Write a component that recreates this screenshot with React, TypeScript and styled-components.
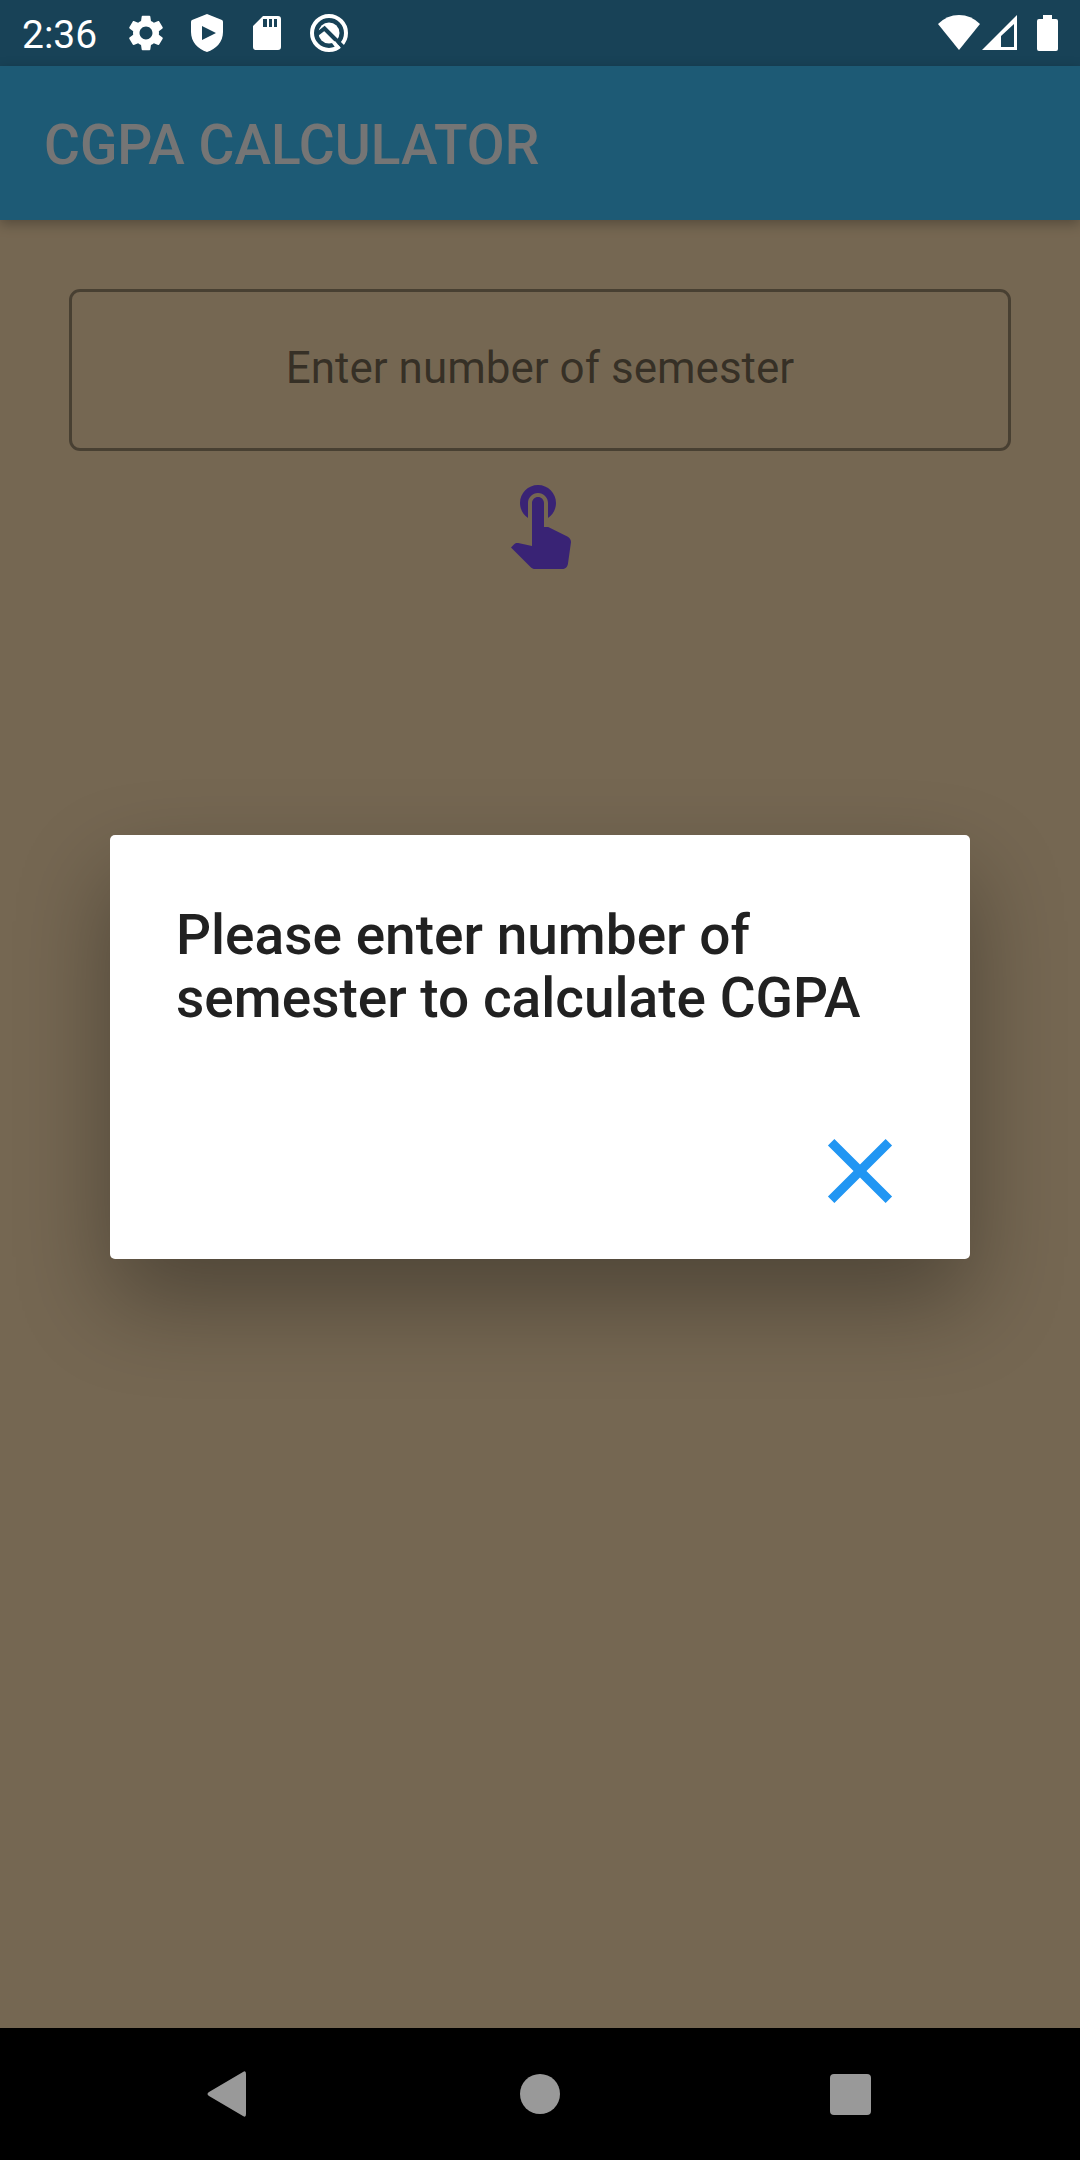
import React, { useState } from "react";
import styled, { createGlobalStyle } from "styled-components";

const GlobalStyle = createGlobalStyle`
  *, *::before, *::after { box-sizing: border-box; }
  body {
    margin: 0;
    font-family: Roboto, "Liberation Sans", sans-serif;
    background: #000;
  }
  button { border: 0; padding: 0; background: none; cursor: pointer; }
`;

const Screen = styled.div`
  display: flex;
  flex-direction: column;
  min-height: 100vh;
`;

const StatusBar = styled.div`
  display: flex;
  align-items: center;
  justify-content: space-between;
  height: 66px;
  padding: 0 20px 0 22px;
  background: #184257;
  color: #fff;
`;

const StatusGroup = styled.div<{ $gap: number }>`
  display: flex;
  align-items: center;
  gap: ${(p) => p.$gap}px;
`;

const Clock = styled.time`
  margin-right: 5px;
  padding-top: 3px;
  font-size: 39px;
  line-height: 46px;
`;

const Glyph = styled.svg`
  display: block;
  fill: currentColor;
`;

const AppArea = styled.div`
  position: relative;
  display: flex;
  flex: 1;
  flex-direction: column;
  background: #ffe0b2;
`;

const AppBar = styled.header`
  display: flex;
  align-items: center;
  height: 154px;
  padding: 4px 44px 0;
  background: #40c4ff;
  box-shadow: 0 4px 12px rgba(0, 0, 0, 0.28);
`;

const AppTitle = styled.h1`
  margin: 0;
  color: #fff;
  font-size: 55px;
  font-weight: 500;
  line-height: 64px;
`;

const Form = styled.form`
  display: flex;
  flex-direction: column;
  align-items: center;
  gap: 22px;
  padding: 69px;
`;

const SemesterInput = styled.input`
  width: 100%;
  height: 162px;
  padding: 0 33px 4px;
  border: 3px solid rgba(0, 0, 0, 0.38);
  border-radius: 11px;
  outline: none;
  background: transparent;
  color: rgba(0, 0, 0, 0.87);
  font-family: inherit;
  font-size: 44px;
  text-align: center;
  &::placeholder { color: rgba(0, 0, 0, 0.54); opacity: 1; }
`;

const TapButton = styled.button`
  color: #7c4dff;
`;

const Scrim = styled.div`
  position: absolute;
  inset: 0;
  display: flex;
  align-items: center;
  padding: 0 110px;
  background: rgba(0, 0, 0, 0.54);
`;

const Dialog = styled.section`
  display: flex;
  flex: 1;
  flex-direction: column;
  gap: 86px;
  padding: 69px 55px 33px 66px;
  border-radius: 5px;
  background: #fff;
  box-shadow: 0 42px 94px rgba(0, 0, 0, 0.33);
`;

const DialogTitle = styled.h2`
  margin: 0;
  color: #212121;
  font-size: 55px;
  font-weight: 500;
  line-height: 63px;
`;

const CloseButton = styled.button`
  align-self: flex-end;
  color: #2196f3;
`;

const NavBar = styled.nav`
  display: grid;
  grid-template-columns: repeat(3, 311px);
  justify-content: center;
  height: 132px;
  background: #000;
`;

const NavButton = styled.button`
  display: grid;
  place-items: center;
  color: #999;
`;

export default function App() {
  const [open, setOpen] = useState(true);
  return (
    <Screen>
      <GlobalStyle />
      <StatusBar>
        <StatusGroup $gap={26}>
          <Clock>2:36</Clock>
          <Glyph width="36" height="36" viewBox="2 2 20 20" aria-label="Settings">
            <path d="M19.14 12.94c.04-.3.06-.61.06-.94 0-.32-.02-.64-.07-.94l2.03-1.58c.18-.14.23-.41.12-.61l-1.92-3.32c-.12-.22-.37-.29-.59-.22l-2.39.96c-.5-.38-1.03-.7-1.62-.94l-.36-2.54c-.04-.24-.24-.41-.48-.41h-3.84c-.24 0-.43.17-.47.41l-.36 2.54c-.59.24-1.13.57-1.62.94l-2.39-.96c-.22-.08-.47 0-.59.22L2.74 8.87c-.12.21-.08.47.12.61l2.03 1.58c-.05.3-.09.63-.09.94s.02.64.07.94l-2.03 1.58c-.18.14-.23.41-.12.61l1.92 3.32c.12.22.37.29.59.22l2.39-.96c.5.38 1.03.7 1.62.94l.36 2.54c.05.24.24.41.48.41h3.84c.24 0 .44-.17.47-.41l.36-2.54c.59-.24 1.13-.56 1.62-.94l2.39.96c.22.08.47 0 .59-.22l1.92-3.32c.12-.22.07-.47-.12-.61l-2.01-1.58zM12 15.6c-1.98 0-3.6-1.62-3.6-3.6s1.62-3.6 3.6-3.6 3.6 1.62 3.6 3.6-1.62 3.6-3.6 3.6z" />
          </Glyph>
          <Glyph width="34" height="38" viewBox="0 0 34 38" aria-label="Play Protect">
            <path fillRule="evenodd" d="M17 0L32 6Q33 6.500 33 8V18C33 28 26 35 17 38C8 35 1 28 1 18V8Q1 6.500 2 6ZM12 12V26L26 19Z" />
          </Glyph>
          <Glyph width="34" height="36" viewBox="1 0 34 36" aria-label="SD card">
            <path fillRule="evenodd" d="M14 1H29Q32 1 32 4V32Q32 35 29 35H7Q4 35 4 32V11ZM14 4V12H18V4ZM20 4V12H23V4ZM25 4V12H28V4Z" />
          </Glyph>
          <Glyph width="38" height="38" viewBox="0 0 38 38" aria-label="Debugging">
            <circle cx="19" cy="19" r="17" fill="none" stroke="currentColor" strokeWidth="4" />
            <circle cx="19" cy="19" r="10.500" />
            <path fill="none" stroke="#184257" strokeWidth="4" d="M6 21L14.500 14.500L34 34" />
            <path d="M22 29L25 27L30 33L27 36Z" />
          </Glyph>
        </StatusGroup>
        <StatusGroup $gap={2}>
          <Glyph width="42" height="36" viewBox="0 0 42 36" aria-label="Wi-Fi">
            <path d="M0 9Q9 0 21 0T42 9L21 35Z" />
          </Glyph>
          <Glyph width="52" height="36" viewBox="0 0 52 36" aria-label="Mobile signal">
            <path fillRule="evenodd" d="M35 0V35H0ZM32 9L19 21V32H32Z" />
          </Glyph>
          <Glyph width="24" height="36" viewBox="0 0 24 36" aria-label="Battery">
            <path d="M7 0H16V4H20Q22 4 22 6V34Q22 36 20 36H3Q1 36 1 34V6Q1 4 3 4H7Z" />
          </Glyph>
        </StatusGroup>
      </StatusBar>
      <AppArea>
        <AppBar>
          <AppTitle>CGPA CALCULATOR</AppTitle>
        </AppBar>
        <Form
          onSubmit={(e) => {
            e.preventDefault();
            setOpen(true);
          }}
        >
          <SemesterInput
            aria-label="Enter number of semester"
            placeholder="Enter number of semester"
            inputMode="numeric"
          />
          <TapButton type="submit" aria-label="Calculate">
            <Glyph width="96" height="96" viewBox="0 0 24 24">
              <path d="M9 11.24V7.5C9 6.12 10.12 5 11.5 5S14 6.12 14 7.5v3.74c1.21-.81 2-2.18 2-3.74C16 5.01 13.99 3 11.5 3S7 5.01 7 7.5c0 1.56.79 2.93 2 3.74zm9.84 4.63l-4.54-2.26c-.17-.07-.35-.11-.54-.11H13v-6c0-.83-.67-1.5-1.5-1.5S10 6.67 10 7.5v10.74l-3.43-.72c-.08-.01-.15-.03-.24-.03-.31 0-.59.13-.79.33l-.79.8 4.94 4.94c.27.27.65.44 1.06.44h6.79c.75 0 1.33-.55 1.44-1.28l.75-5.27c.01-.07.02-.14.02-.2 0-.62-.38-1.16-.91-1.38z" />
            </Glyph>
          </TapButton>
        </Form>
        {open && (
          <Scrim>
            <Dialog role="alertdialog" aria-modal="true" aria-labelledby="dialog-title">
              <DialogTitle id="dialog-title">
                Please enter number of semester to calculate CGPA
              </DialogTitle>
              <CloseButton type="button" aria-label="Close" onClick={() => setOpen(false)}>
                <Glyph width="110" height="110" viewBox="0 0 24 24">
                  <path d="M19 6.41L17.59 5 12 10.59 6.41 5 5 6.41 10.59 12 5 17.59 6.41 19 12 13.41 17.59 19 19 17.59 13.41 12z" />
                </Glyph>
              </CloseButton>
            </Dialog>
          </Scrim>
        )}
      </AppArea>
      <NavBar>
        <NavButton type="button" aria-label="Back">
          <Glyph width="44" height="46" viewBox="0 0 44 46">
            <path d="M36 1Q39 -1 39 3V43Q39 47 36 45L2 25Q-1 23 2 21Z" />
          </Glyph>
        </NavButton>
        <NavButton type="button" aria-label="Home">
          <Glyph width="40" height="40" viewBox="0 0 40 40">
            <circle cx="20" cy="20" r="20" />
          </Glyph>
        </NavButton>
        <NavButton type="button" aria-label="Overview">
          <Glyph width="42" height="42" viewBox="0 0 42 42">
            <rect width="41" height="41" y="1" rx="4" />
          </Glyph>
        </NavButton>
      </NavBar>
    </Screen>
  );
}
